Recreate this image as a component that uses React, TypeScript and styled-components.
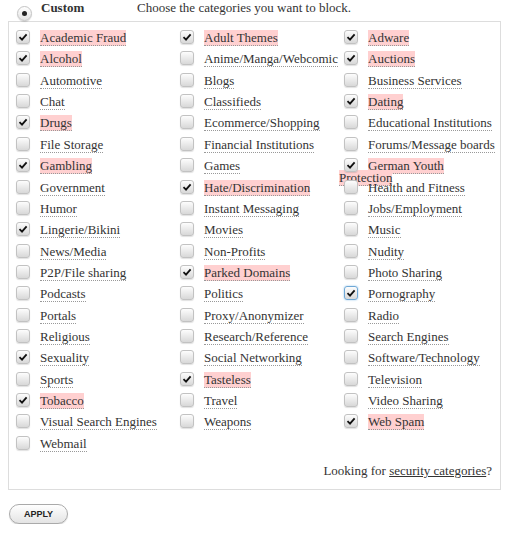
import React from 'react';
import styled, { createGlobalStyle, css } from 'styled-components';

const GlobalStyle = createGlobalStyle`
  html, body {
    margin: 0;
    padding: 0;
    background: #fff;
  }
  body {
    font-family: "Liberation Serif", "Times New Roman", serif;
    color: #333;
  }
`;

const Page = styled.div`
  width: 512px;
  padding: 0 0 0 8px;
  box-sizing: border-box;
`;

const Header = styled.div`
  display: flex;
  align-items: center;
  height: 21px;
`;

const Radio = styled.span`
  position: relative;
  width: 13px;
  height: 13px;
  margin: 5px 9px 0 9px;
  border-radius: 50%;
  border: 1px solid #c4c4c4;
  background: linear-gradient(#ffffff, #e2e2e2);
  box-shadow: 0 1px 1px rgba(0, 0, 0, 0.15);
  &::after {
    content: '';
    position: absolute;
    left: 4px;
    top: 4px;
    width: 5px;
    height: 5px;
    border-radius: 50%;
    background: #222;
  }
`;

const ModeName = styled.span`
  font-weight: bold;
  font-size: 13px;
  width: 96px;
  margin-top: -6px;
`;

const Hint = styled.span`
  font-size: 13px;
  margin-top: -6px;
`;

const Fieldset = styled.div`
  width: 493px;
  box-sizing: border-box;
  border: 1px solid #ddd;
  padding: 6px 0 0 2px;
  height: 469px;
  display: flex;
  flex-direction: column;
`;

const Grid = styled.div`
  display: grid;
  grid-template-columns: repeat(3, 164px);
  grid-auto-rows: 21.37px;
`;

const Item = styled.div<{ wraps?: boolean }>`
  font-size: 13px;
  line-height: 12px;
  padding: 2px 3px 0 0;
  min-width: 0;
  white-space: ${({ wraps }) => (wraps ? 'normal' : 'nowrap')};
`;

const Box = styled.span<{ focused?: boolean }>`
  display: inline-block;
  position: relative;
  box-sizing: border-box;
  width: 14px;
  height: 14px;
  margin: 0 10px 0 5px;
  vertical-align: -2px;
  border: 1px solid #c2c2c2;
  border-radius: 3px;
  background: linear-gradient(#fdfdfd, #d8d8d8);
  box-shadow: 0 1px 1px rgba(0, 0, 0, 0.12);
  ${({ focused }) =>
    focused &&
    css`
      border-color: #6fa8d6;
      box-shadow: 0 0 2px #8cc0ea;
    `}
  svg {
    position: absolute;
    left: 1px;
    top: 1px;
  }
`;

const Label = styled.span<{ blocked: boolean }>`
  border-bottom: 1px dotted #999;
  ${({ blocked }) =>
    blocked &&
    css`
      background: #ffd0d0;
    `}
`;

const Footer = styled.div`
  margin-top: auto;
  padding: 0 8px 10px 0;
  text-align: right;
  font-size: 13px;
`;

const Link = styled.a`
  color: #333;
  text-decoration: underline;
`;

const ApplyButton = styled.button`
  margin: 14px 0 0 1px;
  width: 59px;
  height: 20px;
  border-radius: 10px;
  border: 1px solid #aaa;
  background: linear-gradient(#ffffff, #e4e4e4);
  box-shadow: 0 1px 1px rgba(0, 0, 0, 0.15);
  font-family: "Liberation Sans", Arial, sans-serif;
  font-weight: bold;
  font-size: 9px;
  color: #222;
  padding: 0;
`;

const Check = () => (
  <svg width="10" height="10" viewBox="0 0 10 10">
    <path d="M1.5 5.2 L4 7.6 L8.6 2.3" fill="none" stroke="#111" strokeWidth="1.8" />
  </svg>
);

type Category = {
  name: string;
  blocked: boolean;
  checked?: boolean;
  focused?: boolean;
  wraps?: boolean;
};

const categories: Category[] = [
  { name: 'Academic Fraud', blocked: true },
  { name: 'Adult Themes', blocked: true },
  { name: 'Adware', blocked: true },
  { name: 'Alcohol', blocked: true },
  { name: 'Anime/Manga/Webcomic', blocked: false },
  { name: 'Auctions', blocked: true },
  { name: 'Automotive', blocked: false },
  { name: 'Blogs', blocked: false },
  { name: 'Business Services', blocked: false },
  { name: 'Chat', blocked: false },
  { name: 'Classifieds', blocked: false },
  { name: 'Dating', blocked: true },
  { name: 'Drugs', blocked: true },
  { name: 'Ecommerce/Shopping', blocked: false },
  { name: 'Educational Institutions', blocked: false },
  { name: 'File Storage', blocked: false },
  { name: 'Financial Institutions', blocked: false },
  { name: 'Forums/Message boards', blocked: false },
  { name: 'Gambling', blocked: true },
  { name: 'Games', blocked: false },
  { name: 'German Youth Protection', blocked: true, wraps: true },
  { name: 'Government', blocked: false },
  { name: 'Hate/Discrimination', blocked: true },
  { name: 'Health and Fitness', blocked: false },
  { name: 'Humor', blocked: false },
  { name: 'Instant Messaging', blocked: false },
  { name: 'Jobs/Employment', blocked: false },
  { name: 'Lingerie/Bikini', blocked: false, checked: true },
  { name: 'Movies', blocked: false },
  { name: 'Music', blocked: false },
  { name: 'News/Media', blocked: false },
  { name: 'Non-Profits', blocked: false },
  { name: 'Nudity', blocked: false },
  { name: 'P2P/File sharing', blocked: false },
  { name: 'Parked Domains', blocked: true },
  { name: 'Photo Sharing', blocked: false },
  { name: 'Podcasts', blocked: false },
  { name: 'Politics', blocked: false },
  { name: 'Pornography', blocked: false, checked: true, focused: true },
  { name: 'Portals', blocked: false },
  { name: 'Proxy/Anonymizer', blocked: false },
  { name: 'Radio', blocked: false },
  { name: 'Religious', blocked: false },
  { name: 'Research/Reference', blocked: false },
  { name: 'Search Engines', blocked: false },
  { name: 'Sexuality', blocked: false, checked: true },
  { name: 'Social Networking', blocked: false },
  { name: 'Software/Technology', blocked: false },
  { name: 'Sports', blocked: false },
  { name: 'Tasteless', blocked: true },
  { name: 'Television', blocked: false },
  { name: 'Tobacco', blocked: true },
  { name: 'Travel', blocked: false },
  { name: 'Video Sharing', blocked: false },
  { name: 'Visual Search Engines', blocked: false },
  { name: 'Weapons', blocked: false },
  { name: 'Web Spam', blocked: true },
  { name: 'Webmail', blocked: false },
];

const App = () => (
  <Page>
    <GlobalStyle />
    <Header>
      <Radio />
      <ModeName>Custom</ModeName>
      <Hint>Choose the categories you want to block.</Hint>
    </Header>
    <Fieldset>
      <Grid>
        {categories.map((c) => (
          <Item key={c.name} wraps={c.wraps}>
            <Box focused={c.focused}>{(c.blocked || c.checked) && <Check />}</Box>
            <Label blocked={c.blocked}>{c.name}</Label>
          </Item>
        ))}
      </Grid>
      <Footer>
        Looking for <Link href="#">security categories</Link>?
      </Footer>
    </Fieldset>
    <ApplyButton>APPLY</ApplyButton>
  </Page>
);

export default App;
